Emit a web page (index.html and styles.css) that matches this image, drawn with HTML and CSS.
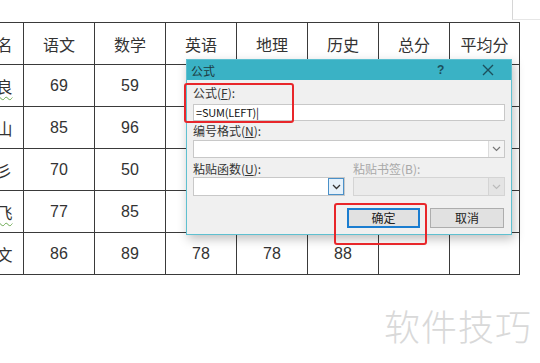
FILE: index.html
```html
<!DOCTYPE html>
<html lang="zh-CN">
<head>
<meta charset="UTF-8">
<title>公式</title>
<link rel="stylesheet" href="styles.css">
</head>
<body>
<div class="page">
    <div class="corner"></div>

    <table class="scores">
        <tr><td>姓名</td><td>语文</td><td>数学</td><td>英语</td><td>地理</td><td>历史</td><td>总分</td><td>平均分</td></tr>
        <tr><td><span class="typo">张良</span></td><td>69</td><td>59</td><td></td><td></td><td></td><td></td><td></td></tr>
        <tr><td>韩山</td><td>85</td><td>96</td><td></td><td></td><td></td><td></td><td></td></tr>
        <tr><td>李彡</td><td>70</td><td>50</td><td></td><td></td><td></td><td></td><td></td></tr>
        <tr><td><span class="typo">张飞</span></td><td>77</td><td>85</td><td></td><td></td><td></td><td></td><td></td></tr>
        <tr><td>李文</td><td>86</td><td>89</td><td>78</td><td>78</td><td>88</td><td></td><td></td></tr>
    </table>

    <div class="dialog">
        <div class="dialog-title">
            <span class="title-text">公式</span>
            <span class="help">?</span>
            <span class="close">
                <svg width="12" height="12" viewBox="0 0 12 12"><path d="M1 1 L11 11 M11 1 L1 11" stroke="#1c4f5c" stroke-width="1.4" fill="none"/></svg>
            </span>
        </div>
        <div class="dialog-body">
            <div class="label">公式(<u>F</u>):</div>
            <div class="field input">=SUM(LEFT)|</div>

            <div class="label gap-s">编号格式(<u>N</u>):</div>
            <div class="field select">
                <span></span>
                <span class="arrow">
                    <svg width="9" height="6" viewBox="0 0 9 6"><path d="M1 1 L4.5 4.5 L8 1" stroke="#777" stroke-width="1.2" fill="none"/></svg>
                </span>
            </div>

            <div class="pair">
                <div class="col">
                    <div class="label">粘贴函数(<u>U</u>):</div>
                    <div class="field select tall">
                        <span></span>
                        <span class="arrow active">
                            <svg width="9" height="6" viewBox="0 0 9 6"><path d="M1 1 L4.5 4.5 L8 1" stroke="#333" stroke-width="1.3" fill="none"/></svg>
                        </span>
                    </div>
                </div>
                <div class="col">
                    <div class="label disabled">粘贴书签(B):</div>
                    <div class="field select tall off">
                        <span></span>
                        <span class="arrow">
                            <svg width="9" height="6" viewBox="0 0 9 6"><path d="M1 1 L4.5 4.5 L8 1" stroke="#bbb" stroke-width="1.2" fill="none"/></svg>
                        </span>
                    </div>
                </div>
            </div>

            <div class="buttons">
                <div class="btn primary">确定</div>
                <div class="btn">取消</div>
            </div>
        </div>
    </div>

    <div class="mark mark-formula"></div>
    <div class="mark mark-ok"></div>

    <div class="watermark">软件技巧</div>
</div>
</body>
</html>
```

FILE: styles.css
```css
*{
    margin: 0;
    padding: 0;
    box-sizing: border-box;
}

body{
    background: #fff;
    font-family: "Liberation Sans", "Noto Sans CJK SC", sans-serif;
    color: #333;
}

.page{
    position: relative;
    width: 540px;
    height: 363px;
    overflow: hidden;
    padding-top: 22px;
}

.corner{
    position: absolute;
    left: 512px;
    top: 0;
    width: 28px;
    height: 20px;
    border-left: 1px solid #d6d6d6;
    border-bottom: 1px solid #e6e6e6;
}

.scores{
    margin-left: -31px;
    border-collapse: collapse;
    table-layout: fixed;
    width: 551px;
}

.scores td{
    width: 71px;
    height: 42px;
    border: 1px solid #3a3a3a;
    text-align: center;
    font-size: 16px;
    padding: 0;
}

.scores td:first-child{
    width: 54px;
}

.scores td:last-child{
    width: 70px;
}

.typo{
    text-decoration: underline wavy #6aa84f;
    text-underline-offset: 3px;
    text-decoration-thickness: 1px;
}

.dialog{
    position: absolute;
    left: 186px;
    top: 59px;
    width: 326px;
    height: 176px;
    background: #f0f0f0;
    border: 1px solid #5fc0d0;
    box-shadow: 2px 4px 10px rgba(0, 0, 0, 0.25);
    font-family: "Noto Sans CJK SC", sans-serif;
    font-size: 12px;
    color: #222;
}

.dialog-title{
    display: flex;
    align-items: center;
    height: 20px;
    background: #3ab2c5;
    padding: 0 4px;
}

.title-text{
    flex: 1;
    color: #1d3a40;
    font-size: 12px;
}

.help{
    width: 14px;
    color: #1c4f5c;
    font-weight: bold;
    font-size: 12px;
    font-family: "Liberation Sans", sans-serif;
    margin-right: 31px;
}

.close{
    display: flex;
    width: 14px;
    margin-right: 11px;
}

.dialog-body{
    padding: 6px 6px 0 6px;
}

.label{
    height: 14px;
    line-height: 14px;
    font-size: 12px;
    color: #333;
}

.label u{
    text-underline-offset: 1px;
}

.label.disabled{
    color: #a8a8a8;
}

.gap-s{
    margin-top: 3px;
}

.field{
    margin-top: 4px;
    height: 17px;
    background: #fff;
    border: 1px solid #c8c8c8;
}

.input{
    font-size: 11px;
    line-height: 15px;
    padding-left: 2px;
    letter-spacing: -0.2px;
    color: #111;
}

.select{
    display: flex;
    justify-content: space-between;
    height: 18px;
    margin-top: 2px;
}

.select .arrow{
    display: flex;
    align-items: center;
    justify-content: center;
    width: 16px;
    border-left: 1px solid #dcdcdc;
    background: #f4f4f4;
}

.select .arrow.active{
    border: 1px solid #4a90c8;
    background: #e6f1fa;
}

.pair{
    display: flex;
    gap: 8px;
    margin-top: 4px;
}

.col{
    flex: 1;
}

.select.tall{
    height: 19px;
    margin-top: 1px;
}

.select.off{
    background: #ebebeb;
    border-color: #d4d4d4;
}

.select.off .arrow{
    background: #e4e4e4;
    border-left-color: #d4d4d4;
}

.buttons{
    display: flex;
    justify-content: flex-end;
    gap: 10px;
    margin-top: 12px;
    padding-right: 1px;
}

.btn{
    width: 74px;
    height: 20px;
    line-height: 18px;
    text-align: center;
    background: #e1e1e1;
    border: 1px solid #adadad;
    font-size: 12px;
    color: #222;
}

.btn.primary{
    border: 2px solid #1a7dd0;
    line-height: 16px;
    width: 73px;
}

.mark{
    position: absolute;
    border: 2px solid #e8262a;
    border-radius: 3px;
}

.mark-formula{
    left: 184px;
    top: 83px;
    width: 110px;
    height: 40px;
}

.mark-ok{
    left: 334px;
    top: 203px;
    width: 93px;
    height: 42px;
}

.watermark{
    position: absolute;
    left: 384px;
    top: 299px;
    font-family: "Noto Sans CJK SC", sans-serif;
    font-size: 36px;
    font-weight: 300;
    color: #d9d9d9;
    letter-spacing: 1px;
}
```
